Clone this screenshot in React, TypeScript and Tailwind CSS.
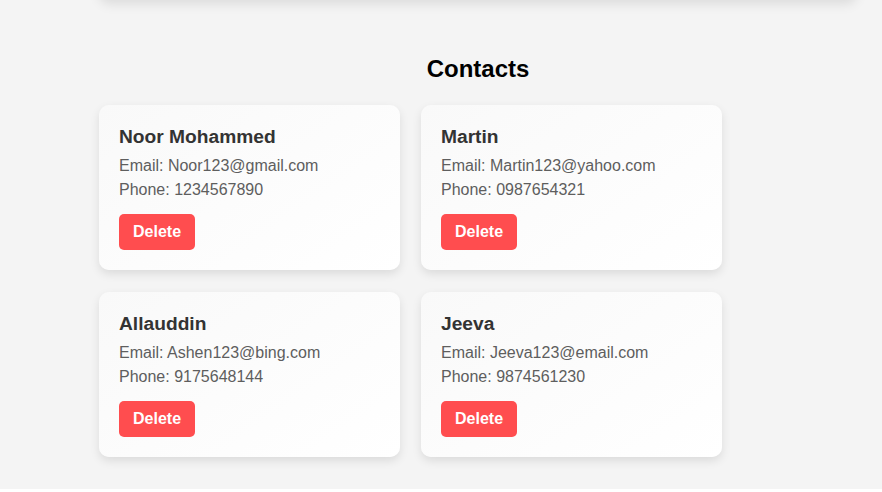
const contacts = [
  { name: "Noor Mohammed", email: "Noor123@gmail.com", phone: "1234567890" },
  { name: "Martin", email: "Martin123@yahoo.com", phone: "0987654321" },
  { name: "Allauddin", email: "Ashen123@bing.com", phone: "9175648144" },
  { name: "Jeeva", email: "Jeeva123@email.com", phone: "9874561230" },
];

function ContactCard({ name, email, phone }: { name: string; email: string; phone: string }) {
  return (
    <div className="w-[301px] rounded-[10px] bg-[linear-gradient(145deg,#f9f9f9,#ffffff)] p-5 shadow-[0_4px_10px_rgba(0,0,0,0.1)]">
      <h3 className="mb-[6px] text-[1.2rem] font-bold leading-[23px] text-[#333]">{name}</h3>
      <p className="text-base leading-6 text-[#5e5e5e]">Email: {email}</p>
      <p className="text-base leading-6 text-[#5e5e5e]">Phone: {phone}</p>
      <button
        type="button"
        className="mt-3 h-9 rounded-[5px] bg-[#ff4d4f] px-[14px] text-base font-bold text-white"
      >
        Delete
      </button>
    </div>
  );
}

export default function App() {
  return (
    <div className="min-h-screen bg-[#f4f4f4] font-['Liberation_Sans',Arial,sans-serif]">
      <div className="ml-[99px] w-[758px]">
        <div className="-mt-[300px] h-[300px] rounded-[10px] bg-white shadow-[0_4px_12px_rgba(0,0,0,0.1)]" />
        <h2 className="mt-[55px] text-center text-2xl font-bold leading-[28px] text-black">Contacts</h2>
        <div className="mt-[22px] flex w-[623px] flex-wrap gap-x-[21px] gap-y-[22px] pb-8">
          {contacts.map((c) => (
            <ContactCard key={c.name} {...c} />
          ))}
        </div>
      </div>
    </div>
  );
}
